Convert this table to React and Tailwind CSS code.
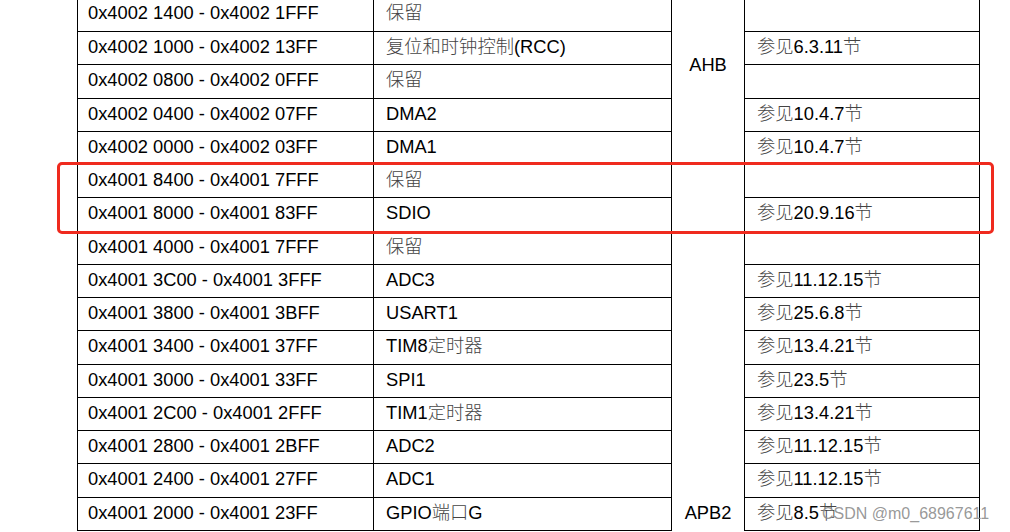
const rows = [
  ['0x4002 1400 - 0x4002 1FFF', '保留', '', 'h-[34px]'],
  ['0x4002 1000 - 0x4002 13FF', '复位和时钟控制(RCC)', '参见6.3.11节', 'h-[33px]'],
  ['0x4002 0800 - 0x4002 0FFF', '保留', '', 'h-[34px]'],
  ['0x4002 0400 - 0x4002 07FF', 'DMA2', '参见10.4.7节', 'h-[33px]'],
  ['0x4002 0000 - 0x4002 03FF', 'DMA1', '参见10.4.7节', 'h-[33px]'],
  ['0x4001 8400 - 0x4001 7FFF', '保留', '', 'h-[33px]'],
  ['0x4001 8000 - 0x4001 83FF', 'SDIO', '参见20.9.16节', 'h-[34px]'],
  ['0x4001 4000 - 0x4001 7FFF', '保留', '', 'h-[33px]'],
  ['0x4001 3C00 - 0x4001 3FFF', 'ADC3', '参见11.12.15节', 'h-[33px]'],
  ['0x4001 3800 - 0x4001 3BFF', 'USART1', '参见25.6.8节', 'h-[33px]'],
  ['0x4001 3400 - 0x4001 37FF', 'TIM8定时器', '参见13.4.21节', 'h-[34px]'],
  ['0x4001 3000 - 0x4001 33FF', 'SPI1', '参见23.5节', 'h-[33px]'],
  ['0x4001 2C00 - 0x4001 2FFF', 'TIM1定时器', '参见13.4.21节', 'h-[33px]'],
  ['0x4001 2800 - 0x4001 2BFF', 'ADC2', '参见11.12.15节', 'h-[33px]'],
  ['0x4001 2400 - 0x4001 27FF', 'ADC1', '参见11.12.15节', 'h-[34px]'],
  ['0x4001 2000 - 0x4001 23FF', 'GPIO端口G', '参见8.5节', 'h-[33px]'],
];

// CJK runs rendered thin and grey, like the song-style glyphs in the PDF
function Mixed({ text }) {
  const parts = text.split(/([\u4e00-\u9fff]+)/).filter(Boolean);
  return parts.map((p, i) =>
    /[\u4e00-\u9fff]/.test(p)
      ? <span key={i} className="text-[#444] font-light">{p}</span>
      : <span key={i}>{p}</span>
  );
}

const cell = 'flex items-center pb-[2px] border-b border-r border-black whitespace-nowrap';

export default function App() {
  return (
    <div className="relative w-[1010px] h-[532px] overflow-hidden bg-white text-black text-[18.3px] leading-none"
      style={{ fontFamily: '"Liberation Sans", "Noto Sans CJK SC", sans-serif' }}>
      <div className="ml-[77px] mt-[-2px] w-[903px] grid grid-cols-[296px_298px_73px_235px] border-l border-black">
        {rows.map(([addr, name, ref, h], i) => (
          <div key={i} className="contents">
            <div className={`${cell} ${h} pl-[10px]`}>{addr}</div>
            <div className={`${cell} ${h} pl-3`}><Mixed text={name} /></div>
            {i === 0 && (
              <div className="row-span-16 border-r border-black flex flex-col items-center">
                <div className="mt-[58px]">AHB</div>
                <div className="mt-auto mb-[9px]">APB2</div>
              </div>
            )}
            <div className={`${cell} ${h} pl-3`}><Mixed text={ref} /></div>
          </div>
        ))}
      </div>

      {/* red highlight box */}
      <div className="absolute left-[57px] top-[162px] w-[937px] h-[72px] border-[3px] border-[#ef2a1e] rounded-[5px]" />

      {/* watermark */}
      <div className="absolute left-[822px] top-[505px] text-[16px] leading-[18px] text-[#8c8c8c]/90">
        CSDN @m0_68967611
      </div>
    </div>
  );
}
